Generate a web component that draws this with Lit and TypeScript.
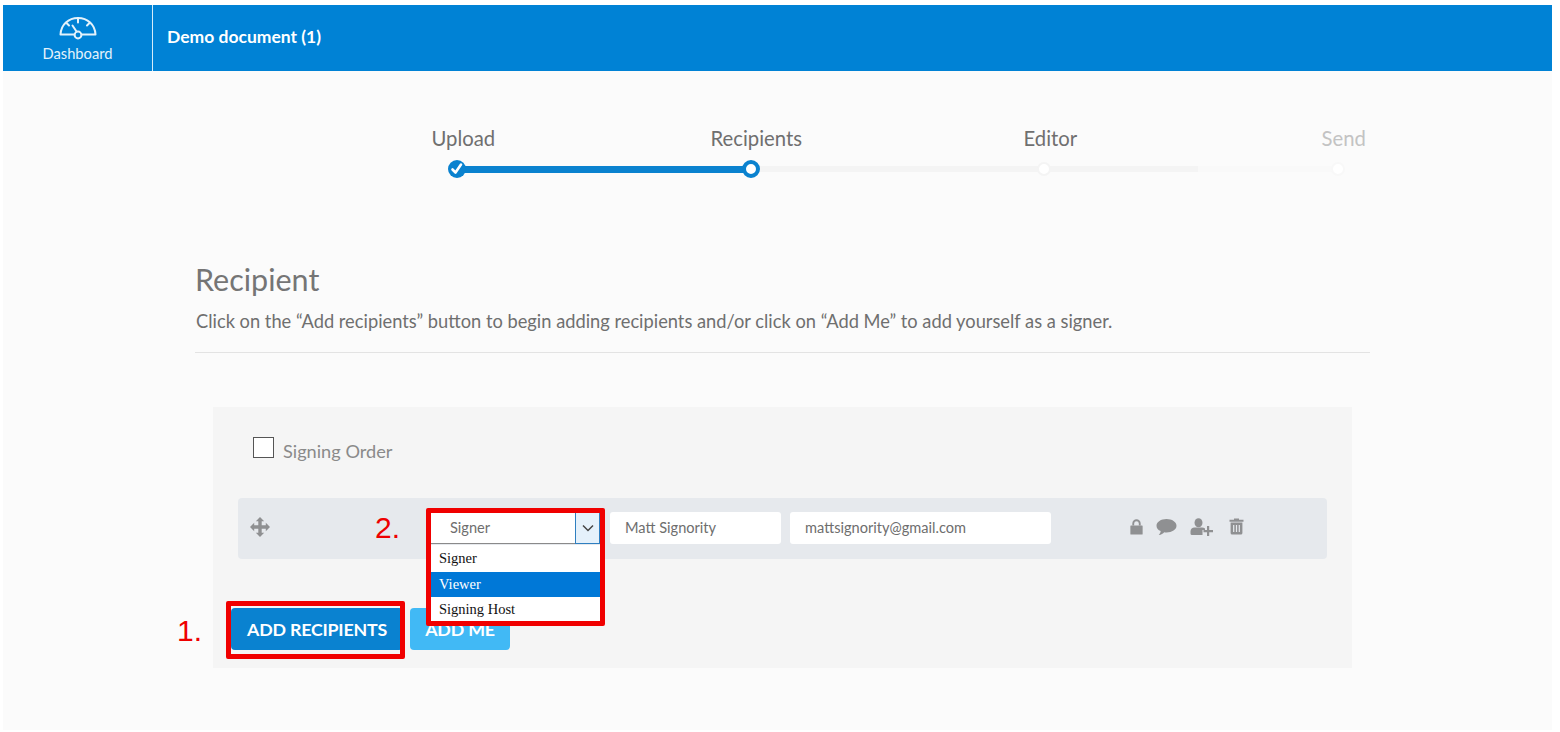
import { LitElement, html, css } from "lit";
import { customElement } from "lit/decorators.js";

const gauge = html`<svg class="gauge" viewBox="0 0 38 24" width="38" height="24" fill="none" stroke="#e4f2fb" stroke-width="2" stroke-linejoin="round" stroke-linecap="round">
  <path d="M1.500 18.500C2 8.500 9.500 2 19 2s17 6.500 17.500 16.500H23M15 18.500H1.500"/>
  <path d="M19 2v4.500M7.500 7l2.500 2.500M30.500 7L28 9.500M13.500 9.500l4 6"/>
  <circle cx="19" cy="19" r="3.400"/>
</svg>`;

const iconFill = "#8f9092";

const moveIcon = html`<svg viewBox="0 0 20 20" width="20" height="20" fill="${iconFill}">
  <path d="M10 0l4.200 4.200h-2.500v4.100h4.100V5.800L20 10l-4.200 4.200v-2.500h-4.100v4.100h2.500L10 20l-4.200-4.200h2.500v-4.100H4.200v2.500L0 10l4.200-4.200v2.500h4.100V4.200H5.800z"/>
</svg>`;

const lockIcon = html`<svg viewBox="0 0 14 17" width="13" height="16" fill="${iconFill}">
  <path d="M1 7h12a.6.6 0 0 1 .6.600V16a.6.6 0 0 1-.6.600H1a.6.600 0 0 1-.6-.600V7.600A.6.600 0 0 1 1 7z"/>
  <path d="M3.500 7V4.700a3.500 3.500 0 0 1 7 0V7" fill="none" stroke="${iconFill}" stroke-width="2"/>
</svg>`;

const chatIcon = html`<svg viewBox="0 0 21 18" width="21" height="18" fill="${iconFill}">
  <path d="M10.500 1C16 1 20.500 3.900 20.500 7.700s-4.500 6.700-10 6.700c-.8 0-1.600-.1-2.300-.2C7 15.600 5.300 16.800 2.800 17c1-1 1.700-2.200 1.900-3.900C2.100 12 .5 10 .5 7.700.5 3.900 5 1 10.500 1z"/>
</svg>`;

const userPlusIcon = html`<svg viewBox="0 0 23 18" width="23" height="18" fill="${iconFill}">
  <ellipse cx="8.500" cy="4.800" rx="4" ry="4.500"/>
  <path d="M.5 15.500v-2.300c0-2.300 1.800-3.700 4-3.700h7.500c1.200 0 2.200.3 3 1V12h-2.500v5H2a1.500 1.500 0 0 1-1.500-1.500z"/>
  <path d="M17 8h2.200v4h3.800v2.200h-3.800v3.800H17v-3.800h-3.500V12H17z"/>
</svg>`;

const trashIcon = html`<svg viewBox="0 0 15 17" width="15" height="17">
  <path d="M5 1.800V.5h5v1.300h4.500v2H.5v-2z" fill="${iconFill}"/>
  <path d="M1.600 4.500h11.800V15a1.500 1.500 0 0 1-1.500 1.500H3.100A1.500 1.500 0 0 1 1.600 15z" fill="${iconFill}"/>
  <path d="M4.700 7v7M7.500 7v7M10.300 7v7" stroke="#e6e9ed" stroke-width="1.200"/>
</svg>`;

@customElement("app-root")
export class AppRoot extends LitElement {
  static styles = css`
    :host {
      display: block;
      width: 1560px;
      height: 732px;
      background: #fff;
      font-family: Lato, "Open Sans", "Liberation Sans", sans-serif;
      overflow: hidden;
    }
    .page {
      position: relative;
      margin: 5px 8px 2px 3px;
      height: 725px;
      background: #fbfbfb;
    }
    .topbar {
      display: flex;
      align-items: stretch;
      height: 66px;
      background: #0082d5;
      color: #fff;
    }
    .dash {
      width: 150px;
      border-right: 1.500px solid #d5ecfa;
      display: flex;
      flex-direction: column;
      align-items: center;
      padding-top: 11px;
      box-sizing: border-box;
      font-size: 14.700px;
      color: #e4f2fb;
    }
    .gauge { display: block; margin-bottom: 4px; }
    .title {
      padding-left: 14px;
      align-self: center;
      font-size: 17.500px;
      font-weight: 700;
      margin-top: -4px;
    }
    .stepper {
      margin: 55px 0 0 429px;
      width: 950px;
    }
    .labels {
      display: grid;
      grid-template-columns: 279px 313px 298px auto;
      margin-left: -0.500px;
      font-size: 20.300px;
      line-height: 24px;
      color: #6f6f6f;
    }
    .labels .dim { color: #c3c3c3; }
    .track {
      position: relative;
      margin-top: 9px;
      height: 20px;
    }
    .line-gray {
      position: absolute;
      left: 26px; top: 7px;
      width: 740px; height: 6px;
      background: #f4f4f4;
    }
    .line-light {
      position: absolute;
      left: 766px; top: 7px;
      width: 140px; height: 6px;
      background: #f9f9f9;
    }
    .line-blue {
      position: absolute;
      left: 26px; top: 7px;
      width: 294px; height: 7px;
      background: #0a82cf;
    }
    .dot {
      position: absolute;
      box-sizing: border-box;
      border-radius: 50%;
    }
    .dot.done {
      left: 16px; top: 1px; width: 18px; height: 18px;
      background: #0a82cf;
    }
    .dot.done svg { display: block; }
    .dot.now {
      left: 310px; top: 1px; width: 18px; height: 18px;
      border: 4px solid #0a82cf;
      background: #fff;
    }
    .dot.next {
      left: 605px; top: 3px; width: 14px; height: 14px;
      border: 2px solid #f4f4f4;
      background: #fff;
    }
    .dot.last {
      left: 899px; top: 3px; width: 14px; height: 14px;
      border: 2px solid #f8f8f8;
      background: #fff;
    }
    .section { margin: 82px 0 0 192px; width: 1175px; }
    h1 {
      margin: 0;
      font-size: 30.500px;
      line-height: 36px;
      font-weight: 400;
      color: #757575;
    }
    .intro {
      margin: 12px 0 0;
      padding: 0 0 19px 1px;
      font-size: 18.300px;
      line-height: 24px;
      color: #6f6f6f;
      border-bottom: 1px solid #e3e3e3;
      white-space: nowrap;
    }
    .panel {
      margin: 54px 0 0 18px;
      width: 1139px;
      height: 261px;
      box-sizing: border-box;
      padding: 31px 25px 0;
      background: #f5f5f5;
    }
    .order {
      display: flex;
      align-items: flex-start;
      gap: 9px;
      height: 60px;
      font-size: 18.200px;
      line-height: 26px;
      color: #8a8a8a;
    }
    .check {
      width: 21px; height: 21px;
      box-sizing: border-box;
      margin: -1px 0 0 15px;
      background: #fff;
      border: 1px solid #555;
    }
    .row {
      display: flex;
      align-items: center;
      height: 61px;
      background: #e6e9ed;
      border-radius: 4px;
      box-sizing: border-box;
      padding: 0 0 2px 12px;
    }
    .move { display: flex; width: 180px; margin-top: -2px; }
    .field {
      box-sizing: border-box;
      height: 32px;
      background: #fff;
      border-radius: 3px;
      font-size: 14.600px;
      line-height: 32px;
      color: #6e6e6e;
      padding-left: 15px;
    }
    .select {
      width: 170px;
      padding-left: 20px;
      margin-right: 10px;
      position: relative;
      border-radius: 0;
      border-bottom: 1px solid #8a8a8a;
    }
    .caret {
      position: absolute;
      right: 0; top: 0; bottom: -1px;
      width: 25px;
      background: #e5f1fb;
      border: 1px solid #2f7fc0;
      box-sizing: border-box;
      display: flex;
      align-items: center;
      justify-content: center;
    }
    .name { width: 171px; margin-right: 9px; }
    .email { width: 261px; }
    .icons {
      display: flex;
      align-items: center;
      gap: 13px;
      margin-left: 79px;
      margin-top: -2px;
    }
    .icons svg:last-child { margin-left: 3px; }
    .menu {
      position: absolute;
      left: 428px; top: 540px;
      width: 170px;
      background: #fff;
      font-family: "Liberation Serif", serif;
      font-size: 14.500px;
      color: #111;
    }
    .menu div { height: 25px; line-height: 25px; padding-left: 8px; }
    .menu div:first-child { height: 26.500px; line-height: 26px; }
    .menu .sel { background: #0078d7; color: #fff; }
    .buttons {
      display: flex;
      gap: 7px;
      margin: 49px 0 0 -7px;
    }
    button {
      height: 42px;
      border: 0;
      border-radius: 4px;
      color: #fff;
      font: 700 17.800px/40px Lato, "Liberation Sans", sans-serif;
      letter-spacing: -0.200px;
      padding: 0;
    }
    .add { width: 172px; background: #0a82d0; }
    .me { width: 100px; background: #41b9f5; }
    .mark {
      position: absolute;
      box-sizing: border-box;
      border: 5px solid #f00000;
      border-radius: 2px;
      pointer-events: none;
    }
    .mark.two { left: 423px; top: 503px; width: 179px; height: 118px; }
    .mark.one { left: 223px; top: 596px; width: 179px; height: 58px; }
    .num {
      position: absolute;
      color: #ee0000;
      font: 400 30px/32px "Liberation Sans", Arial, sans-serif;
    }
    .num.two { left: 372px; top: 507px; }
    .num.one { left: 174px; top: 610px; }
  `;

  render() {
    return html`
      <div class="page">
        <div class="topbar">
          <div class="dash">${gauge}<span>Dashboard</span></div>
          <div class="title">Demo document (1)</div>
        </div>

        <div class="stepper">
          <div class="labels">
            <span>Upload</span><span>Recipients</span><span>Editor</span><span class="dim">Send</span>
          </div>
          <div class="track">
            <div class="line-gray"></div>
            <div class="line-light"></div>
            <div class="line-blue"></div>
            <div class="dot done">
              <svg viewBox="0 0 18 18" width="18" height="18" fill="none" stroke="#fff" stroke-width="2.600" stroke-linecap="round" stroke-linejoin="round"><path d="M4.500 9.500l3 3L13 4.500"/></svg>
            </div>
            <div class="dot now"></div>
            <div class="dot next"></div>
            <div class="dot last"></div>
          </div>
        </div>

        <div class="section">
          <h1>Recipient</h1>
          <p class="intro">Click on the “Add recipients” button to begin adding recipients and/or click on “Add Me” to add yourself as a signer.</p>
          <div class="panel">
            <div class="order"><span class="check"></span><span>Signing Order</span></div>
            <div class="row">
              <div class="move">${moveIcon}</div>
              <div class="field select">Signer
                <span class="caret"><svg viewBox="0 0 12 8" width="12" height="8" fill="none" stroke="#444" stroke-width="1.500"><path d="M1 1.500l5 5 5-5"/></svg></span>
              </div>
              <div class="field name">Matt Signority</div>
              <div class="field email">mattsignority@gmail.com</div>
              <div class="icons">${lockIcon}${chatIcon}${userPlusIcon}${trashIcon}</div>
            </div>
            <div class="buttons">
              <button class="add">ADD RECIPIENTS</button>
              <button class="me">ADD ME</button>
            </div>
          </div>
        </div>

        <div class="menu">
          <div>Signer</div>
          <div class="sel">Viewer</div>
          <div>Signing Host</div>
        </div>
        <div class="mark two"></div>
        <div class="mark one"></div>
        <div class="num two">2.</div>
        <div class="num one">1.</div>
      </div>
    `;
  }
}
